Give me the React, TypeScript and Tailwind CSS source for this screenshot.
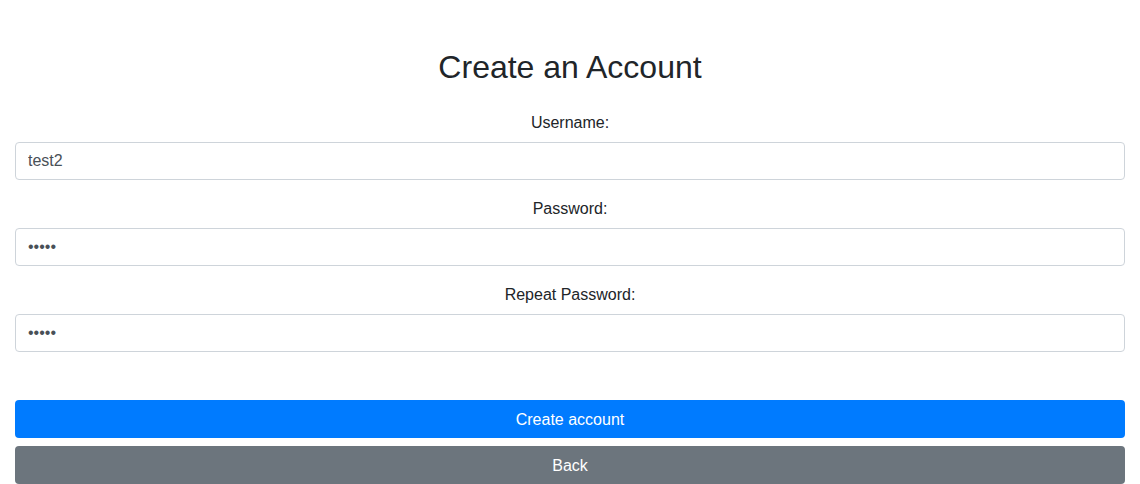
import React from "react";

const fields = [
  { label: "Username:", type: "text", value: "test2" },
  { label: "Password:", type: "password", value: "test2" },
  { label: "Repeat Password:", type: "password", value: "test2" },
];

const App = () => {
  return (
    <div
      className="w-full bg-white text-[#212529] px-[15px]"
      style={{ fontFamily: '"Liberation Sans", Arial, sans-serif' }}
    >
      <h2 className="pt-12 mb-6 text-center text-[32px] leading-[38px] font-normal">
        Create an Account
      </h2>
      <form>
        {fields.map((item, index) => {
          return (
            <div key={index} className="mb-4">
              <label className="block text-center text-base leading-6 pt-px mb-[7px]">
                {item.label}
              </label>
              <input
                type={item.type}
                defaultValue={item.value}
                className="block w-full h-[38px] px-3 text-base text-[#495057] bg-white border border-[#ced4da] rounded outline-none"
              />
            </div>
          );
        })}
        <button
          type="button"
          className="block w-full h-[38px] mt-12 pt-[2px] text-base text-white bg-[#007bff] rounded"
        >
          Create account
        </button>
        <button
          type="button"
          className="block w-full h-[38px] mt-2 pt-[2px] text-base text-white bg-[#6c757d] rounded"
        >
          Back
        </button>
      </form>
    </div>
  );
};

export default App;
